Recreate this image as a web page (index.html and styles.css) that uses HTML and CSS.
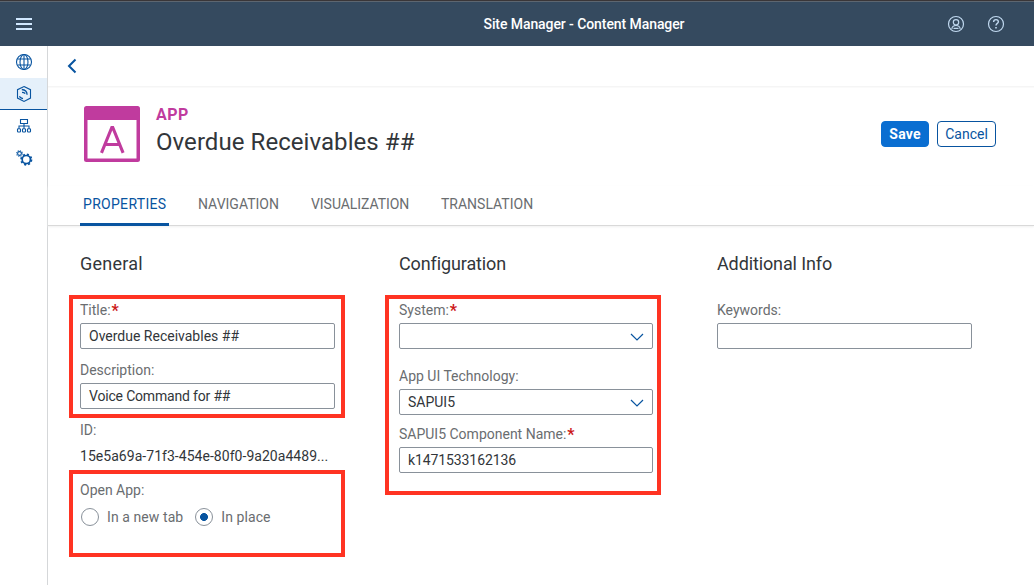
FILE: index.html
```html
<!DOCTYPE html>
<html lang="en">
<head>
<meta charset="utf-8">
<title>Site Manager - Content Manager</title>
<link rel="stylesheet" href="styles.css">
</head>
<body>
<header class="shell">
  <svg class="menu" width="16" height="13" viewBox="0 0 16 13"><path d="M0 1h16M0 6h16M0 11h16"/></svg>
  <div class="shell-title">Site Manager - Content Manager</div>
  <div class="shell-actions">
    <svg width="18" height="18" viewBox="0 0 18 18"><circle cx="9" cy="9" r="7.5"/><circle cx="9" cy="7.3" r="2.7"/><path d="M4.8 13.8c.3-2.2 1.8-3.3 4.2-3.3s3.900 1.100 4.200 3.300M6.500 13.300h5"/></svg>
    <svg width="18" height="18" viewBox="0 0 18 18"><circle cx="9" cy="9" r="7.500"/><path d="M6.600 6.900C6.600 5.400 7.600 4.600 9 4.600s2.400.9 2.400 2.200C11.400 8.500 9 8.400 9 10.600" stroke-width="1.400"/><path d="M8.200 12.800h1.600" stroke-width="1.500"/></svg>
  </div>
</header>
<div class="body">
  <nav class="side">
    <a class="side-item"><svg width="18" height="18" viewBox="0 0 18 18"><circle cx="9" cy="9" r="7.500"/><ellipse cx="9" cy="9" rx="4" ry="7.500"/><path d="M9 1.500v15M2.500 6h13M2.500 12h13"/></svg></a>
    <a class="side-item side-item-on"><svg width="18" height="18" viewBox="0 0 18 18"><path d="M9 1.500l6.500 3.200v8.400L9 16.500l-6.500-3.400V4.700z"/><path d="M6.800 4.500c3.200.2 5.200 1.900 5.300 5.300M7 7.400c1.400 0 2.500.4 3.200 1.200M4.300 11.300c1 1.300 2 2 3.700 2.300" stroke-width="1.300"/></svg></a>
    <a class="side-item"><svg width="18" height="18" viewBox="0 0 18 18"><path d="M5.500 2.500h7v4h-7zM9 6.500v5M4 11.500V9h10v2.500"/><rect x="2.500" y="11.700" width="3" height="3.300" rx=".8"/><rect x="7.500" y="11.700" width="3" height="3.300" rx=".8"/><rect x="12.500" y="11.700" width="3" height="3.300" rx=".8"/></svg></a>
    <a class="side-item"><svg width="18" height="18" viewBox="0 0 18 18"><circle cx="11.300" cy="10.600" r="4.100" stroke-width="1.700"/><circle cx="11.300" cy="10.600" r="5.200" stroke-width="1.700" stroke-dasharray="2.040 2.040"/><circle cx="4.500" cy="4.500" r="1.900"/><circle cx="4.500" cy="4.500" r="2.800" stroke-dasharray="1.100 1.100"/></svg></a>
  </nav>
  <main class="page">
    <div class="backbar"><svg width="10" height="16" viewBox="0 0 10 16"><path d="M8.500 1.500L2 8l6.500 6.500"/></svg></div>
    <section class="object">
      <svg class="app-icon" width="56" height="56" viewBox="0 0 56 56"><rect width="56" height="56" rx="2.500" fill="#c03b9e"/><path d="M3.500 14h49v38.500h-49z" fill="#fff"/><path d="M17.500 46.800L27.800 21.500h1L39.100 46.800M21.300 38.500h14" fill="none" stroke="#c03b9e" stroke-width="3.100"/></svg>
      <div class="object-text">
        <div class="kind">APP</div>
        <h1 class="name">Overdue Receivables ##</h1>
      </div>
      <div class="buttons">
        <button class="btn btn-save">Save</button>
        <button class="btn btn-cancel">Cancel</button>
      </div>
    </section>
    <div class="tabs">
      <div class="tab tab-on">PROPERTIES</div>
      <div class="tab tab-nav">NAVIGATION</div>
      <div class="tab tab-vis">VISUALIZATION</div>
      <div class="tab tab-trans">TRANSLATION</div>
    </div>
    <div class="form">
      <section class="col col-general">
        <h2>General</h2>
        <div class="field"><label>Title:<b>*</b></label><div class="input">Overdue Receivables ##</div></div>
        <div class="field"><label>Description:</label><div class="input input-desc">Voice Command for ##</div></div>
        <div class="field"><label>ID:</label><div class="value">15e5a69a-71f3-454e-80f0-9a20a4489...</div></div>
        <div class="field"><label>Open App:</label>
          <div class="radios">
            <span class="radio"></span><span class="radio-text">In a new tab</span>
            <span class="radio radio-on"></span><span class="radio-text">In place</span>
          </div>
        </div>
      </section>
      <section class="col">
        <h2>Configuration</h2>
        <div class="field field-system"><label>System:<b>*</b></label><div class="input"><svg width="14" height="8" viewBox="0 0 14 8"><path d="M1 1l6 6 6-6"/></svg></div></div>
        <div class="field field-tech"><label>App UI Technology:</label><div class="input">SAPUI5<svg width="14" height="8" viewBox="0 0 14 8"><path d="M1 1l6 6 6-6"/></svg></div></div>
        <div class="field"><label>SAPUI5 Component Name:<b>*</b></label><div class="input input-component">k1471533162136</div></div>
      </section>
      <section class="col">
        <h2>Additional Info</h2>
        <div class="field"><label>Keywords:</label><div class="input"></div></div>
      </section>
    </div>
  </main>
</div>
<div class="mark mark-title"></div>
<div class="mark mark-open"></div>
<div class="mark mark-config"></div>
</body>
</html>
```

FILE: styles.css
```css
* { box-sizing: border-box; }
body { margin: 0; height: 585px; overflow: hidden; background: #fff; color: #32363a; font: 14px/20px Roboto, "Noto Sans", sans-serif; }
svg { fill: none; display: block; }
h1, h2 { margin: 0; font-weight: 400; }

.shell { height: 46px; display: grid; grid-template-columns: 1fr auto 1fr; align-items: center; padding: 0 29px 0 16px; background: #354a5f; border-top: 1px solid #3a3638; box-shadow: inset 0 1px #5d6670; }
.shell-title { color: #fff; font-weight: 500; letter-spacing: -.08px; margin-left: 147px; padding-top: 1px; }
.menu { stroke: #d1e8ff; stroke-width: 2; margin-top: 2px; }
.shell-actions { display: flex; gap: 22px; justify-content: flex-end; stroke: #c0d8ef; stroke-width: 1.2; padding-top: 1px; }

.body { display: flex; height: 539px; }
.side { width: 48px; flex: none; border-right: 1px solid #d5d7d9; }
.side-item { height: 32px; display: flex; align-items: center; padding-left: 15px; stroke: #0854a0; stroke-width: 1.1; }
.side-item-on { background: #e5f0fa; border-bottom: 1px solid #0854a0; }

.page { flex: 1; display: flex; flex-direction: column; }
.backbar { height: 41px; padding: 12px 0 0 19px; border-bottom: 1px solid #f5f5f5; box-shadow: 0 1px #fafafa; stroke: #0854a0; stroke-width: 2; }
.object { height: 99px; display: flex; align-items: flex-start; padding: 19px 38px 0 36px; }
.object-text { margin-left: 16px; flex: 1; }
.kind { height: 18px; line-height: 18px; font-size: 16px; font-weight: 700; color: #c03b9e; letter-spacing: .5px; }
.name { font-size: 24px; line-height: 36px; letter-spacing: .06px; }
.buttons { display: flex; gap: 8px; padding-top: 15px; }
.btn { height: 26px; border-radius: 4px; border: 1px solid #0854a0; background: #fff; color: #0854a0; font: 14px/24px Roboto, sans-serif; padding: 0; }
.btn-save { width: 48px; background: #0a6ed1; border-color: #0a6ed1; color: #fff; font-weight: 700; letter-spacing: .2px; }
.btn-cancel { width: 59px; }

.tabs { height: 40px; display: flex; padding-left: 32px; border-bottom: 1px solid #d9d9d9; box-shadow: 0 1px 2px #f0f0f0; color: #6a6d70; }
.tab { height: 40px; padding: 8px 3px 0; line-height: 20px; margin-right: 26px; white-space: nowrap; }
.tab-on { width: 89px; color: #0854a0; border-bottom: 3px solid #0854a0; letter-spacing: .3px; }
.tab-nav { width: 87px; }
.tab-vis { width: 104px; letter-spacing: -.05px; }

.form { display: grid; grid-template-columns: 255px 254px 255px; column-gap: 64px; padding: 28px 0 0 32px; }
.col h2 { font-size: 18px; line-height: 20px; margin-bottom: 23px; letter-spacing: -.12px; }
.col-general h2 { letter-spacing: .25px; }
.field { margin-bottom: 8px; }
.field-system { margin-bottom: 14px; }
.field-tech { margin-bottom: 6px; }
label { display: block; height: 26px; line-height: 26px; color: #6a6d70; white-space: nowrap; }
label b { display: inline-block; color: #cc1919; font-size: 16px; line-height: 20px; margin-left: 1px; transform: translateY(1px); }
.input { height: 26px; line-height: 24px; border: 1px solid #89919a; border-radius: 2px; padding: 0 8px; display: flex; align-items: center; }
.input svg { margin-left: auto; margin-top: 2px; stroke: #0854a0; stroke-width: 1.2; }
.input-desc { letter-spacing: -.18px; }
.input-component { letter-spacing: -.1px; }
.value { height: 26px; line-height: 26px; white-space: nowrap; letter-spacing: .04px; }
.radios { display: flex; align-items: center; height: 28px; padding-left: 1px; color: #6a6d70; }
.radio { width: 18px; height: 18px; border: 1px solid #89919a; border-radius: 50%; }
.radio-on { background: radial-gradient(circle, #0854a0 3.6px, transparent 4.3px); }
.radio-text { margin-left: 8px; letter-spacing: .08px; }
.radio-text + .radio { margin-left: 12px; }

.mark { position: absolute; border: 4px solid #ff3322; }
.mark-title { left: 69px; top: 295px; width: 276px; height: 123px; }
.mark-open { left: 69px; top: 470px; width: 276px; height: 87px; }
.mark-config { left: 385px; top: 295px; width: 276px; height: 200px; }
```
